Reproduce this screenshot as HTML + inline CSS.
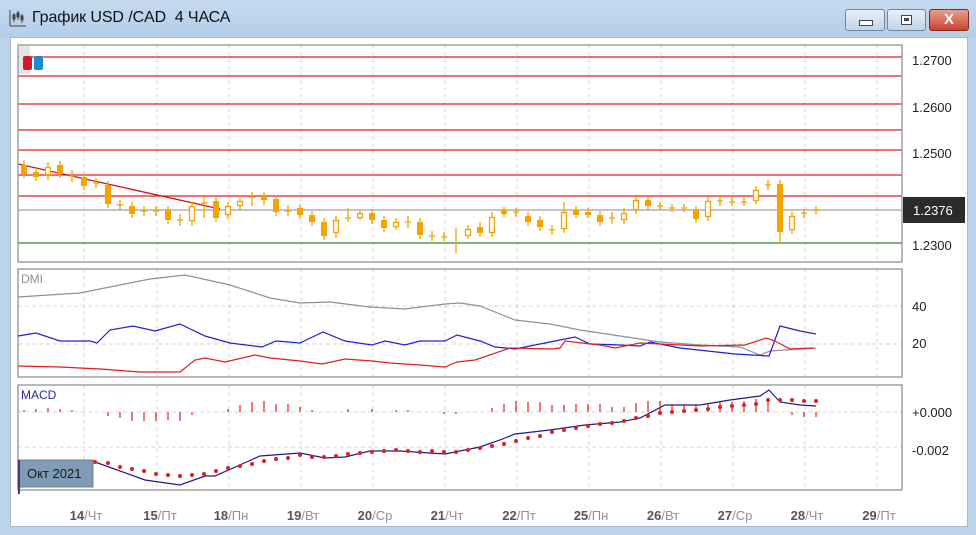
<!DOCTYPE html>
<html><head><meta charset="utf-8"><style>
html,body{margin:0;padding:0;width:976px;height:535px;overflow:hidden;background:#bcd4ec;font-family:"Liberation Sans","DejaVu Sans",sans-serif}
.title{position:absolute;left:0;top:0;width:976px;height:37px;background:linear-gradient(#c5daf0,#b5cde8)}
.t{position:absolute;left:32px;top:9px;font-size:16px;color:#111;letter-spacing:-0.1px}
.btn{position:absolute;top:9px;height:20px;border:1px solid #6f87a3;border-radius:3px;background:linear-gradient(#e8f0f8,#c3d4e7)}
.wh{position:absolute;left:10px;top:37px;width:958px;height:490px;background:#fff;border:1px solid #a9b8c8;box-sizing:border-box}
</style></head><body>
<div class="title">
<svg style="position:absolute;left:8px;top:8px" width="20" height="20"><g stroke="#444" fill="none" stroke-width="1"><path d="M2 2V18H18"/><path d="M6 5V14M10 3V12M14 6V15"/><rect x="5" y="7" width="2" height="4"/><rect x="9" y="5" width="2" height="4"/><rect x="13" y="8" width="2" height="4"/></g></svg>
<div class="t">График USD /CAD&nbsp; 4 ЧАСА</div>
<div class="btn" style="left:845px;width:38px"><div style="position:absolute;left:13px;top:10px;width:12px;height:4px;border:1px solid #445;background:#fff"></div></div>
<div class="btn" style="left:887px;width:37px"><div style="position:absolute;left:13px;top:5px;width:9px;height:8px;border:1px solid #445;background:#fff"><div style="margin:2px;width:5px;height:3px;background:#445"></div></div></div>
<div class="btn" style="left:929px;width:38px;background:linear-gradient(#e8a090,#c9452e);border-color:#8a2a1c;color:#fff;font-weight:bold;font-size:15px;text-align:center;line-height:20px">X</div>
</div>
<div class="wh"></div>
<svg style="position:absolute;left:0;top:0" width="976" height="535" font-family="Liberation Sans, DejaVu Sans, sans-serif">
<g stroke="#d4d4d4" stroke-dasharray="4,3">
<path d="M84 45V262M157 45V262M229 45V262M301 45V262M373 45V262M445 45V262M517 45V262M589 45V262M661 45V262M733 45V262M805 45V262M877 45V262"/>
<path d="M84 269V377M157 269V377M229 269V377M301 269V377M373 269V377M445 269V377M517 269V377M589 269V377M661 269V377M733 269V377M805 269V377M877 269V377"/>
<path d="M84 385V490M157 385V490M229 385V490M301 385V490M373 385V490M445 385V490M517 385V490M589 385V490M661 385V490M733 385V490M805 385V490M877 385V490"/>
<path d="M18 306H902M18 344H902M18 412H902M18 447H902"/>
</g>
<g stroke="#e02020" stroke-width="1.3"><path d="M18 57H902M18 76H902M18 104H902M18 130H902M18 150H902M18 175H902M18 196H902"/></g>
<path d="M18 210H902" stroke="#b0b0b0" stroke-width="1.5"/>
<path d="M18 243H902" stroke="#2a8a2a" stroke-width="1.3"/>
<path d="M18 164L220 209" stroke="#d01010" stroke-width="1.3"/>
<g stroke="#a0a0a0" fill="none" stroke-width="1.5"><rect x="18" y="45" width="884" height="217"/><rect x="18" y="269" width="884" height="108"/><rect x="18" y="385" width="884" height="105"/></g>
<rect x="19" y="46" width="11" height="28" fill="#e5e5e5"/>
<rect x="23" y="56" width="9" height="14" rx="2" fill="#d01c2c"/><rect x="34" y="56" width="9" height="14" rx="2" fill="#1c8ad0"/>
<g stroke="#f5a300" stroke-width="1.3" fill="#f5a300" id="c">
<path d="M24 160V178M36 168V181M48 162V180M60 161V178M72 170V182M84 173V190M96 178V188M108 181V208M120 200V210M132 202V218M144 206V216M156 206V216M168 206V224M180 214V226M192 202V226M204 196V218M216 196V222M228 202V219M240 198V210M252 192V206M264 192V205M276 195V216M288 205V216M300 204V219M312 211V226M324 218V240M336 216V238M348 208V222M360 210V220M372 209V224M384 216V232M396 218V230M408 216V228M420 218V239M432 231V241M444 232V241M456 228V253M468 225V239M480 222V237M492 212V237M504 207V217M516 208V217M528 212V226M540 216V231M552 225V235M564 202V233M576 206V218M588 208V218M600 211V226M612 212V224M624 208V224M636 196V214M648 196V210M660 202V210M672 204V212M684 204V212M696 206V223M708 197V221M720 196V206M732 197V206M744 197V206M756 186V204M768 180V190M780 180V243M792 212V234M804 209V218M816 206V214"/>
<g stroke="none"><rect x="21" y="165" width="6" height="9"/><rect x="33" y="172" width="6" height="5"/><rect x="57" y="165" width="6" height="9"/><rect x="81" y="177" width="6" height="9"/><rect x="105" y="185" width="6" height="19"/><rect x="129" y="206" width="6" height="8"/><rect x="165" y="210" width="6" height="10"/><rect x="213" y="201" width="6" height="17"/><rect x="261" y="196" width="6" height="4"/><rect x="273" y="199" width="6" height="13"/><rect x="297" y="208" width="6" height="7"/><rect x="309" y="215" width="6" height="7"/><rect x="321" y="222" width="6" height="14"/><rect x="369" y="213" width="6" height="7"/><rect x="381" y="220" width="6" height="8"/><rect x="417" y="222" width="6" height="13"/><rect x="477" y="227" width="6" height="6"/><rect x="501" y="210" width="6" height="4"/><rect x="525" y="216" width="6" height="6"/><rect x="537" y="220" width="6" height="7"/><rect x="573" y="210" width="6" height="5"/><rect x="585" y="212" width="6" height="3"/><rect x="597" y="215" width="6" height="7"/><rect x="645" y="200" width="6" height="6"/><rect x="693" y="210" width="6" height="9"/><rect x="777" y="184" width="6" height="48"/></g>
<g fill="#fff"><rect x="45.5" y="167.5" width="5" height="7"/><rect x="189.5" y="206.5" width="5" height="14"/><rect x="225.5" y="206.5" width="5" height="8"/><rect x="237.5" y="201.5" width="5" height="4"/><rect x="333.5" y="220.5" width="5" height="12"/><rect x="357.5" y="213.5" width="5" height="4"/><rect x="393.5" y="222.5" width="5" height="4"/><rect x="465.5" y="229.5" width="5" height="6"/><rect x="489.5" y="217.5" width="5" height="15"/><rect x="561.5" y="212.5" width="5" height="16"/><rect x="621.5" y="213.5" width="5" height="6"/><rect x="633.5" y="200.5" width="5" height="9"/><rect x="705.5" y="201.5" width="5" height="15"/><rect x="753.5" y="190.5" width="5" height="10"/><rect x="789.5" y="216.5" width="5" height="13"/></g>
<path d="M69 176H75M93 183H99M117 205H123M141 211H147M153 211H159M177 220H183M201 203H207M249 197H255M285 211H291M345 218H351M405 222H411M429 236H435M441 237H447M513 212H519M549 230H555M609 218H615M657 206H663M669 208H675M681 208H687M717 201H723M729 202H735M741 202H747M765 185H771M801 213H807M813 210H819"/>
</g>
<rect x="903" y="197" width="62" height="26" fill="#2b2b2b"/>
<g font-size="13" fill="#222"><text x="912" y="65">1.2700</text><text x="912" y="112">1.2600</text><text x="912" y="158">1.2500</text><text x="912" y="250">1.2300</text><text x="912" y="348">20</text><text x="912" y="311">40</text><text x="912" y="417">+0.000</text><text x="912" y="455">-0.002</text><text x="913" y="215" fill="#fff">1.2376</text></g>
<g fill="none" stroke-width="1.2">
<polyline stroke="#909090" points="18,297 80,293 150,279 185,275 230,285 270,298 300,303 330,302 370,307 405,309 445,304 460,303 480,306 515,320 550,324 580,330 620,336 660,342 700,345 740,347 760,355 770,351 816,348"/>
<polyline stroke="#2020d0" points="18,336 36,333 60,341 90,341 97,343 110,330 133,326 155,331 180,324 205,336 230,343 262,347 276,341 300,343 323,332 345,341 372,345 385,341 405,345 420,341 445,341 457,335 480,341 495,347 515,349 550,342 575,337 590,344 620,345 640,346 650,342 680,348 735,354 769,356 780,326 800,331 816,334"/>
<polyline stroke="#e02020" points="18,366 60,367 100,369 140,372 180,372 195,360 205,358 225,362 255,355 270,358 300,361 322,364 345,359 372,361 390,363 420,365 445,367 457,362 475,360 510,348 552,349 560,348 565,341 600,345 615,348 640,343 700,346 745,345 766,338 775,341 790,349 813,348"/>
<polyline stroke="#1c1c8a" points="95,462 145,480 180,485 205,476 215,476 260,456 300,453 325,458 345,457 370,451 400,451 430,453 445,454 480,447 500,440 515,434 550,430 585,425 620,422 640,418 665,405 700,405 730,400 760,396 769,390 780,402 800,405 816,406"/>
</g>
<g stroke="#e02020" stroke-width="1.2"><path d="M24 410V412M36 409V412M48 408V412M60 409V412M72 410V412M108 412V416M120 412V418M132 412V421M144 412V421M156 412V421M168 412V420M180 412V421M192 412V415M228 409V412M240 405V412M252 402V412M264 401V412M276 404V412M288 404V412M300 407V412M312 410V412M348 409V412M372 409V412M396 410V412M408 410V412M444 412V414M456 412V414M492 408V412M504 404V412M516 401V412M528 402V412M540 402V412M552 405V412M564 405V412M576 404V412M588 404V412M600 404V412M612 407V412M624 407V412M636 403V412M648 401V412M660 401V412M672 404V412M684 404V412M696 404V412M708 404V412M720 402V412M732 402V412M744 401V412M756 399V412M768 399V412M792 412V415M804 412V417M816 412V417"/></g>
<g fill="#e02020"><circle cx="95" cy="462" r="2"/><circle cx="108" cy="463" r="2"/><circle cx="120" cy="467" r="2"/><circle cx="132" cy="469" r="2"/><circle cx="144" cy="471" r="2"/><circle cx="156" cy="474" r="2"/><circle cx="168" cy="475" r="2"/><circle cx="180" cy="476" r="2"/><circle cx="192" cy="475" r="2"/><circle cx="204" cy="474" r="2"/><circle cx="216" cy="471" r="2"/><circle cx="228" cy="468" r="2"/><circle cx="240" cy="466" r="2"/><circle cx="252" cy="464" r="2"/><circle cx="264" cy="461" r="2"/><circle cx="276" cy="459" r="2"/><circle cx="288" cy="458" r="2"/><circle cx="300" cy="455" r="2"/><circle cx="312" cy="457" r="2"/><circle cx="324" cy="457" r="2"/><circle cx="336" cy="456" r="2"/><circle cx="348" cy="454" r="2"/><circle cx="360" cy="453" r="2"/><circle cx="372" cy="452" r="2"/><circle cx="384" cy="451" r="2"/><circle cx="396" cy="450" r="2"/><circle cx="408" cy="451" r="2"/><circle cx="420" cy="452" r="2"/><circle cx="432" cy="451" r="2"/><circle cx="444" cy="452" r="2"/><circle cx="456" cy="452" r="2"/><circle cx="468" cy="450" r="2"/><circle cx="480" cy="448" r="2"/><circle cx="492" cy="446" r="2"/><circle cx="504" cy="444" r="2"/><circle cx="516" cy="441" r="2"/><circle cx="528" cy="438" r="2"/><circle cx="540" cy="436" r="2"/><circle cx="552" cy="432" r="2"/><circle cx="564" cy="430" r="2"/><circle cx="576" cy="428" r="2"/><circle cx="588" cy="426" r="2"/><circle cx="600" cy="424" r="2"/><circle cx="612" cy="423" r="2"/><circle cx="624" cy="421" r="2"/><circle cx="636" cy="418" r="2"/><circle cx="648" cy="416" r="2"/><circle cx="660" cy="413" r="2"/><circle cx="672" cy="412" r="2"/><circle cx="684" cy="411" r="2"/><circle cx="696" cy="410" r="2"/><circle cx="708" cy="409" r="2"/><circle cx="720" cy="407" r="2"/><circle cx="732" cy="406" r="2"/><circle cx="744" cy="405" r="2"/><circle cx="756" cy="404" r="2"/><circle cx="768" cy="400" r="2"/><circle cx="780" cy="400" r="2"/><circle cx="792" cy="400" r="2"/><circle cx="804" cy="401" r="2"/><circle cx="816" cy="401" r="2"/></g>
<text x="21" y="283" font-size="12" fill="#909090">DMI</text>
<text x="21" y="399" font-size="12" fill="#2a2a90">MACD</text>
<rect x="18" y="460" width="75" height="27" fill="#7f9bb6" stroke="#6a8299"/><rect x="18" y="460" width="2" height="34" fill="#553377"/>
<text x="27" y="478" font-size="13" fill="#1a1a1a">Окт 2021</text>
<g font-size="13" fill="#909090" text-anchor="middle"><text x="86" y="520"><tspan fill="#555" font-weight="bold">14</tspan>/Чт</text><text x="160" y="520"><tspan fill="#555" font-weight="bold">15</tspan>/Пт</text><text x="231" y="520"><tspan fill="#555" font-weight="bold">18</tspan>/Пн</text><text x="303" y="520"><tspan fill="#555" font-weight="bold">19</tspan>/Вт</text><text x="375" y="520"><tspan fill="#555" font-weight="bold">20</tspan>/Ср</text><text x="447" y="520"><tspan fill="#555" font-weight="bold">21</tspan>/Чт</text><text x="519" y="520"><tspan fill="#555" font-weight="bold">22</tspan>/Пт</text><text x="591" y="520"><tspan fill="#555" font-weight="bold">25</tspan>/Пн</text><text x="663" y="520"><tspan fill="#555" font-weight="bold">26</tspan>/Вт</text><text x="735" y="520"><tspan fill="#555" font-weight="bold">27</tspan>/Ср</text><text x="807" y="520"><tspan fill="#555" font-weight="bold">28</tspan>/Чт</text><text x="879" y="520"><tspan fill="#555" font-weight="bold">29</tspan>/Пт</text></g>
</svg>
</body></html>
